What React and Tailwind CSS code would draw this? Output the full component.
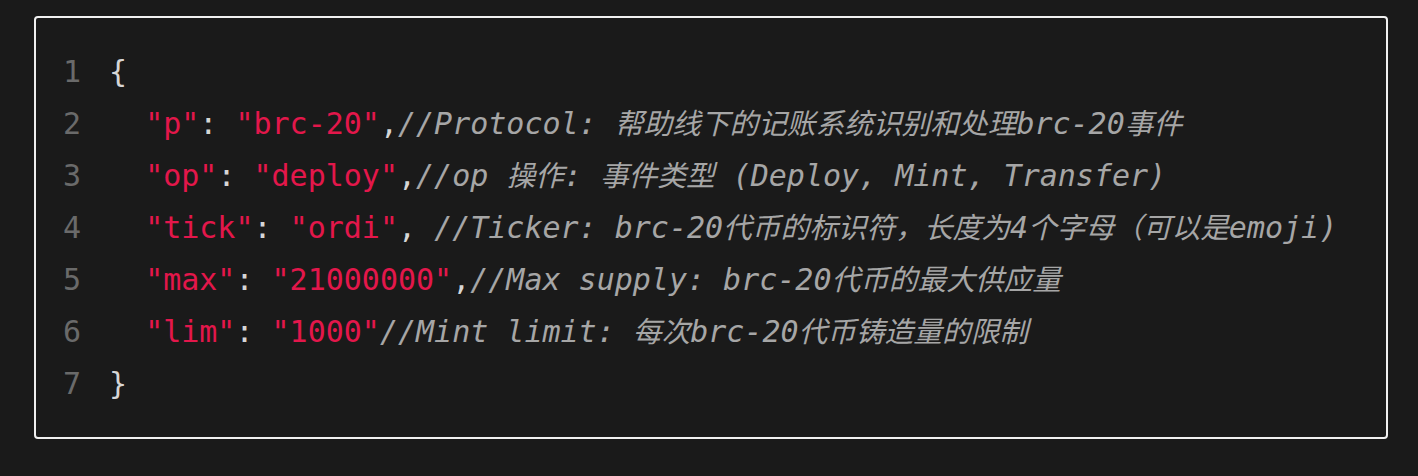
import React from 'react';

// one entry per line: [text, kind]
const lines = [
  [['{', 'p']],
  [['  ', 'p'], ['"p"', 's'], [': ', 'p'], ['"brc-20"', 's'], [',', 'p'], ['//Protocol: 帮助线下的记账系统识别和处理brc-20事件', 'c']],
  [['  ', 'p'], ['"op"', 's'], [': ', 'p'], ['"deploy"', 's'], [',', 'p'], ['//op 操作: 事件类型 (Deploy, Mint, Transfer)', 'c']],
  [['  ', 'p'], ['"tick"', 's'], [': ', 'p'], ['"ordi"', 's'], [', ', 'p'], ['//Ticker: brc-20代币的标识符，长度为4个字母（可以是emoji)', 'c']],
  [['  ', 'p'], ['"max"', 's'], [': ', 'p'], ['"21000000"', 's'], [',', 'p'], ['//Max supply: brc-20代币的最大供应量', 'c']],
  [['  ', 'p'], ['"lim"', 's'], [': ', 'p'], ['"1000"', 's'], ['//Mint limit: 每次brc-20代币铸造量的限制', 'c']],
  [['}', 'p']],
];

const colors = {
  p: 'text-[#d6d6d6]',
  s: 'text-[#e3174b]',
  c: 'text-[#a6a6a6] italic',
};

// CJK glyphs in the shot run a bit narrower than the mono cell math expects
const Comment = ({ text }) => {
  const parts = text.split(/([\u3000-\u303f\u4e00-\u9fff\uff00-\uffef]+)/);
  return (
    <span className={colors.c}>
      {parts.map((part, i) =>
        i % 2 === 1 ? (
          <span key={i} className="text-[28.7px]">{part}</span>
        ) : (
          part
        )
      )}
    </span>
  );
};

export default function App() {
  return (
    <div className="w-[1418px] h-[476px] bg-[#1a1a1a] pt-[16px] pl-[34px] pr-[30px]">
      <div
        className="h-[423px] border-2 border-[#f0f0f0] rounded-[4px] pt-[28px] pl-[27px] whitespace-pre text-[30px] leading-[52px]"
        style={{ fontFamily: '"DejaVu Sans Mono", "Noto Sans CJK SC", monospace' }}
      >
        {lines.map((segs, n) => (
          <div key={n} className="flex">
            <span className="w-[18px] text-right text-[#6a6a6a]">{n + 1}</span>
            <span className="pl-[28px]">
              {segs.map(([t, k], i) =>
                k === 'c' ? <Comment key={i} text={t} /> : (
                  <span key={i} className={colors[k]}>{t}</span>
                )
              )}
            </span>
          </div>
        ))}
      </div>
    </div>
  );
}
